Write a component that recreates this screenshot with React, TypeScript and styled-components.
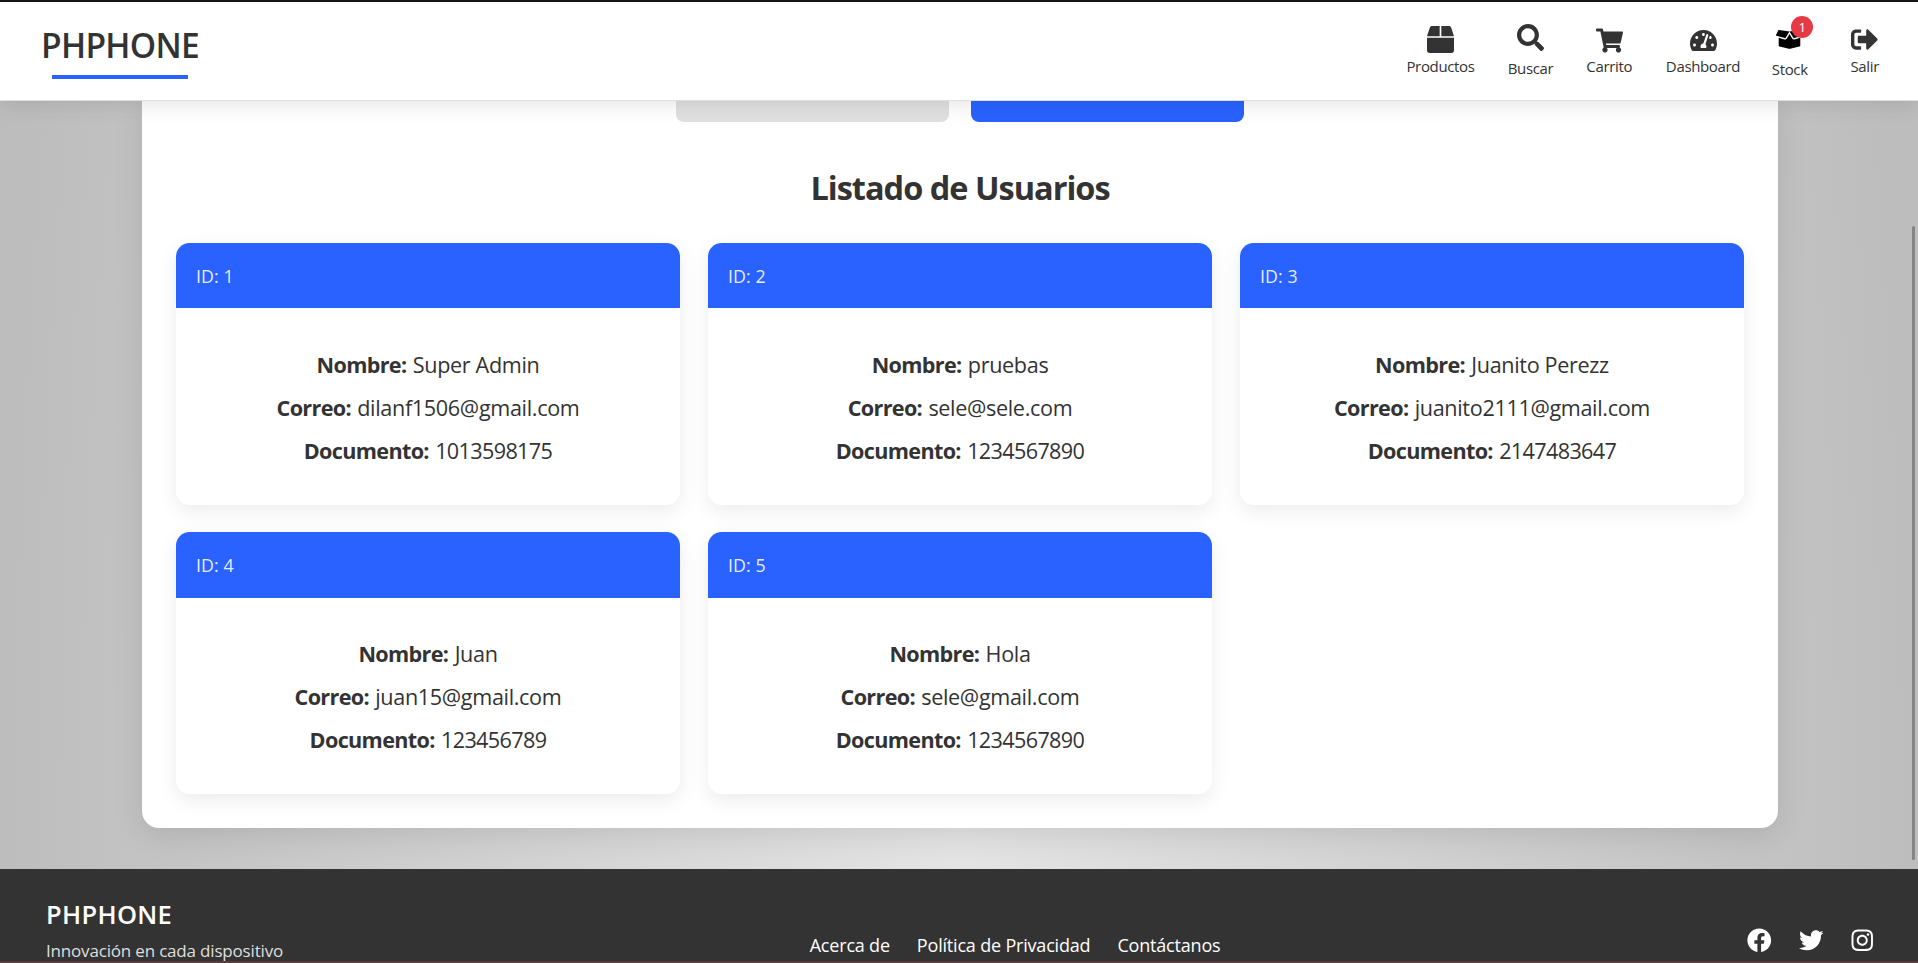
import React from 'react';
import styled, { createGlobalStyle } from 'styled-components';
import {
  FaBox,
  FaBoxOpen,
  FaFacebook,
  FaInstagram,
  FaSearch,
  FaShoppingCart,
  FaSignOutAlt,
  FaTachometerAlt,
  FaTwitter,
} from 'react-icons/fa';
import type { IconType } from 'react-icons';

const blue = '#2962ff';
const ink = '#333333';

const GlobalStyle = createGlobalStyle`
  *, *::before, *::after { box-sizing: border-box; }
  body {
    margin: 0;
    overflow: hidden;
    font-family: 'Segoe UI', 'Open Sans', 'Noto Sans', sans-serif;
    color: ${ink};
  }
  h1, h2, p, ul { margin: 0; padding: 0; }
  ul { list-style: none; }
  a { color: inherit; text-decoration: none; }
`;

const Page = styled.div`
  position: relative;
  display: flex;
  flex-direction: column;
  height: 963px;
  overflow: hidden;
  border-top: 2px solid #15121c;
  border-bottom: 2px solid #5b3a40;
  background: radial-gradient(ellipse 960px 3000px at 959px 850px, #e4e4e4, #bdbdbd);
`;

const Header = styled.header`
  position: relative;
  z-index: 2;
  flex: none;
  display: flex;
  justify-content: space-between;
  height: 99px;
  padding: 0 25px 0 35px;
  background: #fff;
  border-bottom: 1px solid #dedede;
  box-shadow: 0 4px 20px rgba(0, 0, 0, 0.1);
`;

const Logo = styled.a`
  display: flex;
  flex-direction: column;
  align-items: center;
  width: 170px;
  padding-top: 20px;
  font-size: 33.5px;
  font-weight: 600;
  line-height: 46px;
  letter-spacing: -0.7px;

  &::after {
    content: '';
    width: 136px;
    height: 4px;
    margin-top: 7px;
    background: ${blue};
  }
`;

const Nav = styled.nav`
  display: flex;
  gap: 30px;
  padding-top: 22px;
`;

const NavItem = styled.a<{ $width: number }>`
  display: flex;
  flex-direction: column;
  align-items: center;
  width: ${(p) => p.$width}px;
`;

const NavIcon = styled.span<{ $raise: number; $black?: boolean }>`
  position: relative;
  display: flex;
  align-items: center;
  justify-content: center;
  height: 32px;
  padding-bottom: ${(p) => p.$raise * 2}px;
  color: ${(p) => (p.$black ? '#000' : ink)};

  svg {
    flex: none;
    overflow: visible;
  }
`;

const NavLabel = styled.span<{ $drop: number }>`
  margin-top: ${(p) => p.$drop}px;
  font-size: 15px;
  line-height: 20px;
  letter-spacing: -0.35px;
  white-space: nowrap;
`;

const Badge = styled.span`
  position: absolute;
  top: -8px;
  left: 15px;
  width: 22px;
  height: 22px;
  border-radius: 50%;
  background: #e63946;
  color: #fff;
  font-size: 13.5px;
  line-height: 23px;
  text-align: center;
`;

const Panel = styled.main`
  flex: none;
  width: 1636px;
  height: 727px;
  margin-left: 142px;
  padding: 0 34px 34px;
  background: #fff;
  border-radius: 0 0 17px 17px;
  box-shadow: 0 8px 30px rgba(0, 0, 0, 0.1);
`;

const Tabs = styled.div`
  display: flex;
  justify-content: center;
  gap: 22px;
`;

const Tab = styled.div<{ $active?: boolean }>`
  width: 273px;
  height: 21px;
  border-radius: 0 0 8px 8px;
  background: ${(p) => (p.$active ? blue : '#e0e0e0')};
`;

const Title = styled.h2`
  margin: 43px 0 33px;
  font-size: 32.5px;
  font-weight: 700;
  line-height: 45px;
  letter-spacing: -1px;
  text-align: center;
`;

const Cards = styled.div`
  display: grid;
  grid-template-columns: repeat(3, 1fr);
  gap: 27.2px 28px;
`;

const Card = styled.article`
  height: 262px;
  overflow: hidden;
  border-radius: 13.6px;
  background: #fff;
  box-shadow: 0 6px 20px rgba(0, 0, 0, 0.08);
`;

const CardHeader = styled.div`
  height: 65.4px;
  padding: 0 20px;
  background: ${blue};
  color: rgba(255, 255, 255, 0.9);
  font-size: 17.8px;
  line-height: 67px;
  letter-spacing: 0.1px;
`;

const CardBody = styled.div`
  padding: 35.9px 20px 32px;
  font-size: 21.6px;
  line-height: 42.8px;
  letter-spacing: -0.34px;
  text-align: center;
`;

const FieldName = styled.strong`
  margin-right: 1px;
  font-weight: 700;
  letter-spacing: -0.66px;
`;

const Digits = styled.span`
  letter-spacing: -0.64px;
`;

const Footer = styled.footer`
  flex: none;
  display: flex;
  justify-content: space-between;
  height: 120px;
  margin-top: 41px;
  padding: 0 43.4px 0 46px;
  background: #333;
  color: #fff;
`;

const Brand = styled.div`
  padding-top: 28px;
`;

const BrandName = styled.h2`
  font-size: 25.5px;
  font-weight: 600;
  line-height: 35px;
  letter-spacing: 0.3px;
`;

const Tagline = styled.p`
  margin-top: 7px;
  font-size: 17px;
  line-height: 24px;
  letter-spacing: -0.18px;
  color: rgba(255, 255, 255, 0.85);
`;

const FooterLinks = styled.ul`
  display: flex;
  gap: 27px;
  padding-top: 64px;
  font-size: 18px;
  line-height: 25px;
  letter-spacing: -0.19px;
`;

const Social = styled.div`
  display: flex;
  align-items: center;
  gap: 27px;
  height: 24px;
  margin-top: 59px;
`;

const ScrollThumb = styled.div`
  position: absolute;
  top: 224px;
  right: 3px;
  z-index: 3;
  width: 3px;
  height: 634px;
  border-radius: 2px;
  background: #858585;
`;

interface NavEntry {
  label: string;
  icon: IconType;
  width: number;
  raise: number;
  drop: number;
  badge?: string;
}

const navEntries: NavEntry[] = [
  { label: 'Productos', icon: FaBox, width: 70, raise: 0.5, drop: 0 },
  { label: 'Buscar', icon: FaSearch, width: 50, raise: 2.5, drop: 2 },
  { label: 'Carrito', icon: FaShoppingCart, width: 47.5, raise: 0, drop: 0 },
  { label: 'Dashboard', icon: FaTachometerAlt, width: 80, raise: 0, drop: 0 },
  { label: 'Stock', icon: FaBoxOpen, width: 33.5, raise: 1, drop: 3, badge: '1' },
  { label: 'Salir', icon: FaSignOutAlt, width: 56.5, raise: 0.5, drop: 0 },
];

const users = [
  { id: 1, name: 'Super Admin', email: 'dilanf1506@gmail.com', document: '1013598175' },
  { id: 2, name: 'pruebas', email: 'sele@sele.com', document: '1234567890' },
  { id: 3, name: 'Juanito Perezz', email: 'juanito2111@gmail.com', document: '2147483647' },
  { id: 4, name: 'Juan', email: 'juan15@gmail.com', document: '123456789' },
  { id: 5, name: 'Hola', email: 'sele@gmail.com', document: '1234567890' },
];

export default function App() {
  return (
    <Page>
      <GlobalStyle />
      <Header>
        <Logo>PHPHONE</Logo>
        <Nav>
          {navEntries.map(({ icon: Icon, ...entry }) => (
            <NavItem key={entry.label} $width={entry.width}>
              <NavIcon $raise={entry.raise} $black={Boolean(entry.badge)}>
                <Icon size={27} />
                {entry.badge && <Badge>{entry.badge}</Badge>}
              </NavIcon>
              <NavLabel $drop={entry.drop}>{entry.label}</NavLabel>
            </NavItem>
          ))}
        </Nav>
      </Header>

      <Panel>
        <Tabs>
          <Tab />
          <Tab $active />
        </Tabs>
        <Title>Listado de Usuarios</Title>
        <Cards>
          {users.map((user) => (
            <Card key={user.id}>
              <CardHeader>ID: {user.id}</CardHeader>
              <CardBody>
                <p>
                  <FieldName>Nombre:</FieldName> {user.name}
                </p>
                <p>
                  <FieldName>Correo:</FieldName> {user.email}
                </p>
                <p>
                  <FieldName>Documento:</FieldName> <Digits>{user.document}</Digits>
                </p>
              </CardBody>
            </Card>
          ))}
        </Cards>
      </Panel>

      <Footer>
        <Brand>
          <BrandName>PHPHONE</BrandName>
          <Tagline>Innovación en cada dispositivo</Tagline>
        </Brand>
        <FooterLinks>
          <li>Acerca de</li>
          <li>Política de Privacidad</li>
          <li>Contáctanos</li>
        </FooterLinks>
        <Social>
          <FaFacebook size={24.5} />
          <FaTwitter size={24.5} />
          <FaInstagram size={24.5} />
        </Social>
      </Footer>
      <ScrollThumb />
    </Page>
  );
}
